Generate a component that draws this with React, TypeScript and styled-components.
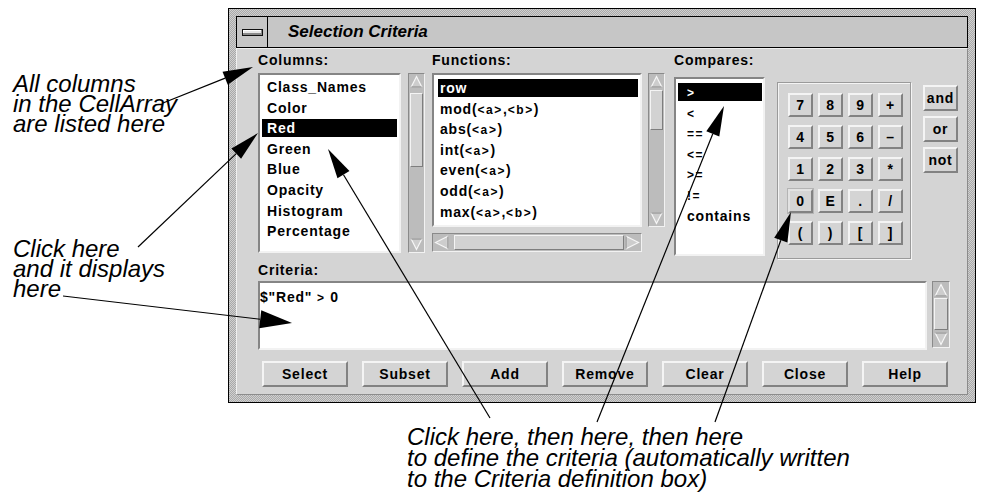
import React from 'react';
import styled, { createGlobalStyle } from 'styled-components';

const GlobalStyle = createGlobalStyle`
  html, body {
    margin: 0;
    padding: 0;
    background: #fff;
  }
  body {
    font-family: 'Liberation Sans', Arial, sans-serif;
  }
`;

const uiFont = `'Liberation Sans', Arial, sans-serif`;
const face = '#d4d4d4';
const light = '#f4f4f4';
const shade = '#828282';

const Stage = styled.div`
  position: relative;
  width: 1006px;
  height: 501px;
  overflow: hidden;
  background: #fff;
`;

const TopRow = styled.div`
  display: flex;
  align-items: flex-start;
`;

const Notes = styled.div`
  flex: none;
  width: 228px;
  box-sizing: border-box;
  padding-left: 13px;
  display: flex;
  flex-direction: column;
`;

const Note = styled.div<{ $top: number }>`
  margin-top: ${({ $top }) => $top}px;
  font: italic 24px/20px ${uiFont};
  color: #000;
  white-space: nowrap;
`;

const Caption = styled.div`
  margin: 23px 0 0 407px;
  font: italic 24px/21px ${uiFont};
  color: #000;
  white-space: nowrap;
`;

/* ---------- window chrome ---------- */

const Frame = styled.div`
  flex: none;
  margin-top: 8px;
  width: 748px;
  box-sizing: border-box;
  border: 1px solid #000;
  padding: 7px;
  background: repeating-conic-gradient(#a9a9a9 0 25%, #d0d0d0 0 50%) 0 0 / 2px 2px;
`;

const TitleBar = styled.div`
  display: flex;
  height: 32px;
  box-sizing: border-box;
  border: 1px solid #000;
  background: #c6c6c6;
`;

const MenuBox = styled.div`
  flex: none;
  width: 31px;
  box-sizing: border-box;
  border-right: 1px solid #000;
  display: flex;
  align-items: center;
  justify-content: center;
`;

const MenuGlyph = styled.div`
  width: 21px;
  height: 7px;
  box-sizing: border-box;
  border: 1px solid #111;
  background: #e6e6e6;
  box-shadow: inset -1px -2px 0 #8a8a8a, inset 1px 1px 0 #fff;
`;

const Title = styled.div`
  padding-left: 20px;
  font: italic bold 17px/30px ${uiFont};
  color: #000;
`;

const Body = styled.div`
  box-sizing: border-box;
  border: 1px solid;
  border-color: #f0f0f0 #8c8c8c #8c8c8c #f0f0f0;
  background: ${face};
  padding: 3px 0 7px 21px;
`;

const TopSection = styled.div`
  display: flex;
  align-items: flex-start;
`;

const Group = styled.div<{ $gapAfter: number }>`
  display: flex;
  flex-direction: column;
  margin-right: ${({ $gapAfter }) => $gapAfter}px;
`;

const Label = styled.div`
  height: 16px;
  margin-bottom: 5px;
  font: bold 14px/16px ${uiFont};
  letter-spacing: 0.8px;
  color: #000;
`;

const Row = styled.div<{ $gap: number; $top?: number }>`
  display: flex;
  align-items: flex-start;
  gap: ${({ $gap }) => $gap}px;
  margin-top: ${({ $top }) => $top || 0}px;
`;

const ListBox = styled.div<{ $w: number; $h: number; $pad: string; $top?: number }>`
  flex: none;
  width: ${({ $w }) => $w}px;
  height: ${({ $h }) => $h}px;
  margin-top: ${({ $top }) => $top || 0}px;
  box-sizing: border-box;
  background: #fff;
  border: 2px solid;
  border-color: #858585 #f2f2f2 #f2f2f2 #858585;
  padding: ${({ $pad }) => $pad};
  overflow: hidden;
`;

const ListItem = styled.div<{ $selected?: boolean; $indent: number }>`
  height: 18px;
  margin-bottom: 2.6px;
  padding-left: ${({ $indent }) => $indent}px;
  font: bold 14px/18px ${uiFont};
  letter-spacing: 0.8px;
  white-space: nowrap;
  background: ${({ $selected }) => ($selected ? '#000' : 'transparent')};
  color: ${({ $selected }) => ($selected ? '#fff' : '#000')};
`;

const Small = styled.span`
  font-size: 12px;
  letter-spacing: 1.6px;
`;

/* ---------- scroll bars ---------- */

const Trough = styled.div<{ $vertical: boolean; $length: number; $thickness: number }>`
  flex: none;
  display: flex;
  flex-direction: ${({ $vertical }) => ($vertical ? 'column' : 'row')};
  width: ${({ $vertical, $length, $thickness }) => ($vertical ? $thickness : $length)}px;
  height: ${({ $vertical, $length, $thickness }) => ($vertical ? $length : $thickness)}px;
  box-sizing: border-box;
  padding: 1px;
  border: 1px solid;
  border-color: #8a8a8a #f2f2f2 #f2f2f2 #8a8a8a;
  background: #bcbcbc;
`;

const Track = styled.div<{ $vertical: boolean }>`
  flex: 1;
  min-width: 0;
  min-height: 0;
  display: flex;
  flex-direction: ${({ $vertical }) => ($vertical ? 'column' : 'row')};
`;

const Thumb = styled.div<{ $vertical: boolean; $offset: number; $size: number }>`
  flex: none;
  box-sizing: border-box;
  ${({ $vertical, $offset, $size }) =>
    $vertical
      ? `margin-top: ${$offset}px; height: ${$size}px;`
      : `margin-left: ${$offset}px; width: ${$size}px;`}
  background: #d2d2d2;
  border: 1px solid;
  border-color: ${light} #7e7e7e #7e7e7e ${light};
`;

const ArrowSvg = styled.svg`
  flex: none;
  display: block;
`;

const rotation = { up: 0, right: 90, down: 180, left: 270 };

function ScrollArrow({ dir, size }: { dir: keyof typeof rotation; size: number }) {
  const c = size / 2;
  return (
    <ArrowSvg width={size} height={size} viewBox={`0 0 ${size} ${size}`}>
      <g transform={`rotate(${rotation[dir]} ${c} ${c})`}>
        <polygon
          points={`${c},1.5 ${size - 1.5},${size - 1.5} 1.5,${size - 1.5}`}
          fill="#cdcdcd"
          stroke="#f6f6f6"
          strokeWidth="1.2"
        />
        <line x1="1.5" y1={size - 1.2} x2={size - 1.5} y2={size - 1.2} stroke="#8a8a8a" strokeWidth="1" />
      </g>
    </ArrowSvg>
  );
}

type ScrollProps = {
  vertical?: boolean;
  length: number;
  thickness: number;
  offset: number;
  size: number;
};

function ScrollBar({ vertical = false, length, thickness, offset, size }: ScrollProps) {
  const arrow = thickness - 4;
  return (
    <Trough $vertical={vertical} $length={length} $thickness={thickness}>
      <ScrollArrow dir={vertical ? 'up' : 'left'} size={arrow} />
      <Track $vertical={vertical}>
        <Thumb $vertical={vertical} $offset={offset} $size={size} />
      </Track>
      <ScrollArrow dir={vertical ? 'down' : 'right'} size={arrow} />
    </Trough>
  );
}

/* ---------- buttons ---------- */

const PushButton = styled.button<{ $w: number; $h: number; $focused?: boolean }>`
  flex: none;
  width: ${({ $w }) => $w}px;
  height: ${({ $h }) => $h}px;
  box-sizing: border-box;
  margin: 0;
  padding: 0;
  display: flex;
  align-items: center;
  justify-content: center;
  background: ${face};
  border: 2px solid;
  border-color: ${({ $focused }) =>
    $focused ? `#e2e2e2 ${shade} ${shade} #e2e2e2` : `${light} ${shade} ${shade} ${light}`};
  box-shadow: ${({ $focused }) => ($focused ? '0 0 0 1px #b4b4b4' : 'none')};
  font: bold 14px/1 ${uiFont};
  letter-spacing: 0.8px;
  color: #000;
`;

const KeyPanel = styled.div`
  flex: none;
  margin: 30px 12px 0 0;
  width: 134px;
  height: 177px;
  box-sizing: border-box;
  border: 1px solid #9a9a9a;
  box-shadow: inset 1px 1px 0 ${light}, 1px 1px 0 ${light};
  padding: 10px 0 0 10px;
  display: grid;
  grid-template-columns: repeat(4, 25px);
  grid-auto-rows: 24px;
  column-gap: 5px;
  row-gap: 8px;
`;

const LogicColumn = styled.div`
  flex: none;
  margin-top: 33px;
  display: flex;
  flex-direction: column;
  gap: 5px;
`;

const CriteriaLabel = styled(Label)`
  margin-top: 3px;
  margin-bottom: 3px;
`;

const CriteriaBox = styled.div`
  flex: none;
  width: 669px;
  height: 69px;
  box-sizing: border-box;
  padding-top: 5px;
  background: #fff;
  border: 2px solid;
  border-color: #858585 #f2f2f2 #f2f2f2 #858585;
  font: bold 14px/18px ${uiFont};
  letter-spacing: 0.8px;
  color: #000;
`;

const ButtonRow = styled.div`
  display: flex;
  gap: 14px;
  margin: 11px 0 0 4px;
`;

/* ---------- callout arrows ---------- */

const Overlay = styled.svg`
  position: absolute;
  left: 0;
  top: 0;
  pointer-events: none;
`;

type Callout = { from: [number, number]; to: [number, number]; len?: number; half?: number };

const callouts: Callout[] = [
  { from: [163, 103], to: [253, 67] },
  { from: [138, 247], to: [258, 133] },
  { from: [63, 296], to: [292, 323], len: 32, half: 9 },
  { from: [490, 418], to: [328, 149] },
  { from: [597, 422], to: [724, 106] },
  { from: [715, 422], to: [791, 212] }
];

function CalloutArrow({ from, to, len = 30, half = 7 }: Callout) {
  const dx = to[0] - from[0];
  const dy = to[1] - from[1];
  const d = Math.hypot(dx, dy);
  const ux = dx / d;
  const uy = dy / d;
  const bx = to[0] - ux * len;
  const by = to[1] - uy * len;
  const head = `${to[0]},${to[1]} ${bx - uy * half},${by + ux * half} ${bx + uy * half},${by - ux * half}`;
  return (
    <g>
      <line x1={from[0]} y1={from[1]} x2={bx} y2={by} stroke="#000" strokeWidth="1.2" />
      <polygon points={head} fill="#000" />
    </g>
  );
}

/* ---------- data ---------- */

const columns = ['Class_Names', 'Color', 'Red', 'Green', 'Blue', 'Opacity', 'Histogram', 'Percentage'];
const functions = ['row', 'mod(<a>,<b>)', 'abs(<a>)', 'int(<a>)', 'even(<a>)', 'odd(<a>)', 'max(<a>,<b>)'];
const compares = ['>', '<', '==', '<=', '>=', '!=', 'contains'];
const keys = ['7', '8', '9', '+', '4', '5', '6', '–', '1', '2', '3', '*', '0', 'E', '.', '/', '(', ')', '[', ']'];
const logic = ['and', 'or', 'not'];
const actions = ['Select', 'Subset', 'Add', 'Remove', 'Clear', 'Close', 'Help'];

function withSmallArgs(text: string) {
  return text.split(/(<[ab]>)/).map((part, i) =>
    /^<[ab]>$/.test(part) ? <Small key={i}>{part}</Small> : <React.Fragment key={i}>{part}</React.Fragment>
  );
}

export default function App() {
  return (
    <Stage>
      <GlobalStyle />
      <TopRow>
        <Notes>
          <Note $top={74}>
            All columns
            <br />
            in the CellArray
            <br />
            are listed here
          </Note>
          <Note $top={105}>
            Click here
            <br />
            and it displays
            <br />
            here
          </Note>
        </Notes>

        <Frame>
          <TitleBar>
            <MenuBox>
              <MenuGlyph />
            </MenuBox>
            <Title>Selection Criteria</Title>
          </TitleBar>

          <Body>
            <TopSection>
              <Group $gapAfter={7}>
                <Label>Columns:</Label>
                <Row $gap={7}>
                  <ListBox $w={143} $h={180} $pad="3px 2px 0 2px">
                    {columns.map((c) => (
                      <ListItem key={c} $indent={5} $selected={c === 'Red'}>
                        {c}
                      </ListItem>
                    ))}
                  </ListBox>
                  <ScrollBar vertical length={180} thickness={17} offset={5} size={74} />
                </Row>
              </Group>

              <Group $gapAfter={9}>
                <Label>Functions:</Label>
                <Row $gap={6}>
                  <ListBox $w={210} $h={154} $pad="4px 2px 0 4px">
                    {functions.map((f) => (
                      <ListItem key={f} $indent={2} $selected={f === 'row'}>
                        {withSmallArgs(f)}
                      </ListItem>
                    ))}
                  </ListBox>
                  <ScrollBar vertical length={154} thickness={17} offset={2} size={40} />
                </Row>
                <Row $gap={0} $top={6}>
                  <ScrollBar length={210} thickness={19} offset={5} size={170} />
                </Row>
              </Group>

              <Group $gapAfter={12}>
                <Label>Compares:</Label>
                <ListBox $w={91} $h={179} $pad="4px 1px 0 2px" $top={4}>
                  {compares.map((c) => (
                    <ListItem key={c} $indent={9} $selected={c === '>'}>
                      {c === 'contains' ? c : <Small>{c}</Small>}
                    </ListItem>
                  ))}
                </ListBox>
              </Group>

              <KeyPanel>
                {keys.map((k) => (
                  <PushButton key={k} $w={25} $h={24} $focused={k === '0'}>
                    {k}
                  </PushButton>
                ))}
              </KeyPanel>

              <LogicColumn>
                {logic.map((l) => (
                  <PushButton key={l} $w={35} $h={26}>
                    {l}
                  </PushButton>
                ))}
              </LogicColumn>
            </TopSection>

            <CriteriaLabel>Criteria:</CriteriaLabel>
            <Row $gap={5}>
              <CriteriaBox>
                $"Red" <Small>&gt;</Small> 0
              </CriteriaBox>
              <ScrollBar vertical length={67} thickness={18} offset={1} size={32} />
            </Row>

            <ButtonRow>
              {actions.map((a) => (
                <PushButton key={a} $w={86} $h={26}>
                  {a}
                </PushButton>
              ))}
            </ButtonRow>
          </Body>
        </Frame>
      </TopRow>

      <Caption>
        Click here, then here, then here
        <br />
        to define the criteria (automatically written
        <br />
        to the Criteria definition box)
      </Caption>

      <Overlay width={1006} height={501} viewBox="0 0 1006 501">
        {callouts.map((c, i) => (
          <CalloutArrow key={i} {...c} />
        ))}
      </Overlay>
    </Stage>
  );
}
